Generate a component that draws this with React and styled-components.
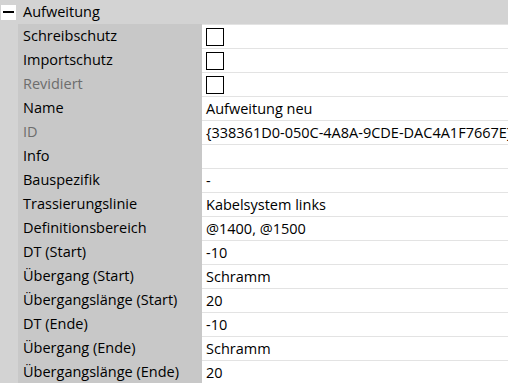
import React from 'react';
import styled, { createGlobalStyle } from 'styled-components';

const GlobalStyle = createGlobalStyle`
  html, body {
    margin: 0;
    padding: 0;
    background: #ffffff;
    overflow: hidden;
  }
`;

const Grid = styled.div`
  width: 508px;
  height: 383px;
  overflow: hidden;
  background: #d3d3d3;
  font-family: 'Open Sans', 'Noto Sans', sans-serif;
  font-size: 14.5px;
  color: #000;
`;

const Category = styled.div`
  display: flex;
  align-items: center;
  height: 24px;
  background: #d3d3d3;
`;

const Toggle = styled.div`
  width: 15px;
  height: 15px;
  margin-left: 1px;
  background: #fff;
  display: flex;
  align-items: center;
  justify-content: center;

  &::before {
    content: '';
    width: 11px;
    height: 2px;
    background: #000;
  }
`;

const CategoryTitle = styled.span`
  margin-left: 7px;
  margin-top: -1px;
`;

const Row = styled.div`
  display: grid;
  grid-template-columns: 18px 184px 1fr;
  height: 24px;
`;

const Gutter = styled.div`
  background: #d3d3d3;
`;

const Label = styled.div`
  display: flex;
  align-items: center;
  padding-left: 5px;
  padding-bottom: 1px;
  background: #c8c8c8;
  color: ${(p) => (p.$disabled ? '#6d6d6d' : '#000')};
  white-space: nowrap;
`;

const Value = styled.div`
  display: flex;
  align-items: center;
  padding-left: 4px;
  background: #fff;
  border-top: 1px solid #e3e3e3;
  white-space: nowrap;
  overflow: hidden;
`;

const Check = styled.span`
  box-sizing: border-box;
  flex-shrink: 0;
  width: 18px;
  height: 18px;
  margin-top: 1px;
  border: 1px solid #000;
  background: #fff;
`;

const rows = [
  { label: 'Schreibschutz', check: true },
  { label: 'Importschutz', check: true },
  { label: 'Revidiert', check: true, disabled: true },
  { label: 'Name', value: 'Aufweitung neu' },
  { label: 'ID', value: '{338361D0-050C-4A8A-9CDE-DAC4A1F7667E}', disabled: true },
  { label: 'Info', value: '' },
  { label: 'Bauspezifik', value: '-' },
  { label: 'Trassierungslinie', value: 'Kabelsystem links' },
  { label: 'Definitionsbereich', value: '@1400, @1500' },
  { label: 'DT (Start)', value: '-10' },
  { label: 'Übergang (Start)', value: 'Schramm' },
  { label: 'Übergangslänge (Start)', value: '20' },
  { label: 'DT (Ende)', value: '-10' },
  { label: 'Übergang (Ende)', value: 'Schramm' },
  { label: 'Übergangslänge (Ende)', value: '20' },
];

export default function App() {
  return (
    <>
      <GlobalStyle />
      <Grid>
        <Category>
          <Toggle />
          <CategoryTitle>Aufweitung</CategoryTitle>
        </Category>
        {rows.map((r) => (
          <Row key={r.label}>
            <Gutter />
            <Label $disabled={r.disabled}>{r.label}</Label>
            <Value>{r.check ? <Check /> : r.value}</Value>
          </Row>
        ))}
      </Grid>
    </>
  );
}
